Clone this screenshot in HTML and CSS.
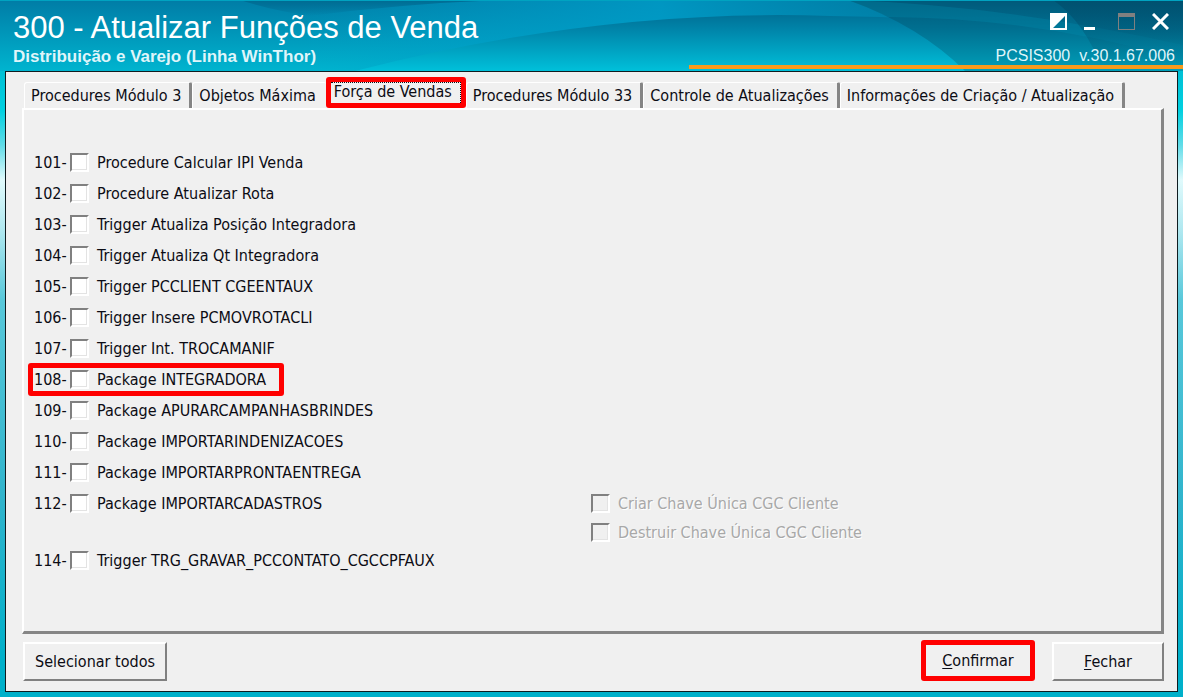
FILE: index.html
```html
<!DOCTYPE html>
<html lang="pt-BR">
<head>
<meta charset="utf-8">
<title>300 - Atualizar Funções de Venda</title>
<link rel="stylesheet" href="styles.css">
</head>
<body>
<div class="window">
  <header class="titlebar">
    <svg class="backdrop" viewBox="0 0 1183 71" preserveAspectRatio="none" aria-hidden="true">
      <defs>
        <linearGradient id="base" x1="0" y1="0" x2="0" y2="1"><stop offset="0" stop-color="#007ca6"/><stop offset="1" stop-color="#00b4cf"/></linearGradient>
        <linearGradient id="glow" x1="0" y1="0" x2="1" y2="0"><stop offset="0" stop-color="#00a0cc" stop-opacity="0"/><stop offset="0.6" stop-color="#009cc8" stop-opacity="0.8"/><stop offset="1" stop-color="#007ca4" stop-opacity="0.6"/></linearGradient>
        <linearGradient id="swoop" gradientUnits="userSpaceOnUse" x1="0" y1="0" x2="0" y2="71"><stop offset="0.2" stop-color="#007197"/><stop offset="0.4" stop-color="#0083a8"/><stop offset="1" stop-color="#00c0da"/></linearGradient>
        <linearGradient id="top" x1="0" y1="0" x2="0" y2="1"><stop offset="0" stop-color="#006b92"/><stop offset="1" stop-color="#006b92" stop-opacity="0"/></linearGradient>
        <linearGradient id="right" x1="0" y1="0" x2="0" y2="1"><stop offset="0" stop-color="#00597a"/><stop offset="0.4" stop-color="#006f90"/><stop offset="1" stop-color="#009fb9"/></linearGradient>
        <linearGradient id="shade" x1="0" y1="0" x2="0" y2="1"><stop offset="0" stop-color="#004a68" stop-opacity="0.6"/><stop offset="1" stop-color="#004a68" stop-opacity="0"/></linearGradient>
      </defs>
      <path fill="url(#base)" d="M0 0H1183V71H0Z"/>
      <path fill="url(#glow)" d="M300 0H900V71H300Z"/>
      <path fill="url(#top)" d="M240 0H500Q400 4 310 16Q270 10 240 0Z"/>
      <path fill="url(#swoop)" d="M355 71Q600 8 830 16Q1040 18 1183 60V71Z"/>
      <path fill="url(#right)" d="M848 0Q920 26 965 71H1183V0Z"/>
      <path fill="#0090b0" fill-opacity="0.3" d="M848 0Q1010 6 1183 45V60Q1040 18 888 17Q868 8 848 0Z"/>
      <path fill="url(#shade)" d="M1053 0Q1085 22 1103 71H1183V0Z"/>
      <path fill="#00a3c1" d="M0 0H1183V1H0Z"/>
    </svg>
    <div class="heading">
      <h1>300 - Atualizar Funções de Venda</h1>
      <p class="subtitle">Distribuição e Varejo (Linha WinThor)</p>
    </div>
    <div class="status">
      <div class="controls">
        <button class="control" type="button" aria-label="Alternar"><svg width="17" height="17" viewBox="0 0 17 17"><path fill="#fff" fill-rule="evenodd" d="M0 0H17V17H0ZM15 3L3 15H15Z"/></svg></button>
        <button class="control" type="button" aria-label="Minimizar"><svg width="17" height="17" viewBox="0 0 17 17"><path fill="#fff" d="M0 14H11V17H0Z"/></svg></button>
        <button class="control" type="button" aria-label="Maximizar" disabled><svg width="17" height="17" viewBox="0 0 17 17"><path fill="#808080" fill-rule="evenodd" d="M0 0H17V17H0ZM1 4V16H16V4Z"/></svg></button>
        <button class="control" type="button" aria-label="Fechar janela"><svg width="17" height="17" viewBox="0 0 17 17"><path stroke="#fff" stroke-width="3" d="M1 1L16 16M16 1L1 16"/></svg></button>
      </div>
      <p class="version"><span>PCSIS300</span><span>v.30.1.67.006</span></p>
    </div>
  </header>
  <main class="client">
    <div class="tabs" role="tablist">
      <button class="tab" role="tab" type="button">Procedures Módulo 3</button>
      <button class="tab before-active" role="tab" type="button">Objetos Máxima</button>
      <button class="tab active" role="tab" type="button" aria-selected="true"><span class="focus">Força de Vendas</span></button>
      <button class="tab" role="tab" type="button">Procedures Módulo 33</button>
      <button class="tab" role="tab" type="button">Controle de Atualizações</button>
      <button class="tab" role="tab" type="button">Informações de Criação / Atualização</button>
    </div>
    <section class="panel" role="tabpanel">
      <div class="list">
        <label class="row"><span class="code">101-</span><input type="checkbox">Procedure Calcular IPI Venda</label>
        <label class="row"><span class="code">102-</span><input type="checkbox">Procedure Atualizar Rota</label>
        <label class="row"><span class="code">103-</span><input type="checkbox">Trigger Atualiza Posição Integradora</label>
        <label class="row"><span class="code">104-</span><input type="checkbox">Trigger Atualiza Qt Integradora</label>
        <label class="row"><span class="code">105-</span><input type="checkbox">Trigger PCCLIENT CGEENTAUX</label>
        <label class="row"><span class="code">106-</span><input type="checkbox">Trigger Insere PCMOVROTACLI</label>
        <label class="row"><span class="code">107-</span><input type="checkbox">Trigger Int. TROCAMANIF</label>
        <label class="row marked"><span class="code">108-</span><input type="checkbox">Package INTEGRADORA</label>
        <label class="row"><span class="code">109-</span><input type="checkbox">Package APURARCAMPANHASBRINDES</label>
        <label class="row"><span class="code">110-</span><input type="checkbox">Package IMPORTARINDENIZACOES</label>
        <label class="row"><span class="code">111-</span><input type="checkbox">Package IMPORTARPRONTAENTREGA</label>
        <label class="row"><span class="code">112-</span><input type="checkbox">Package IMPORTARCADASTROS</label>
        <label class="row last"><span class="code">114-</span><input type="checkbox">Trigger TRG_GRAVAR_PCCONTATO_CGCCPFAUX</label>
      </div>
      <div class="extras">
        <label class="row off"><input type="checkbox" disabled>Criar Chave Única CGC Cliente</label>
        <label class="row off"><input type="checkbox" disabled>Destruir Chave Única CGC Cliente</label>
      </div>
    </section>
    <footer class="actions">
      <button class="button wide" type="button">Selecionar todos</button>
      <button class="button confirm" type="button"><u>C</u>onfirmar</button>
      <button class="button" type="button"><u>F</u>echar</button>
    </footer>
  </main>
</div>
</body>
</html>
```
FILE: styles.css
```css
* { box-sizing: border-box; }
body {
  margin: 0;
  font: 16px/20px "DejaVu Sans Condensed", "DejaVu Sans", sans-serif;
  color: #0c0c14;
}
button { font: inherit; color: inherit; }
h1, p { margin: 0; }
.window {
  min-height: 100vh;
  display: flex;
  flex-direction: column;
  padding: 0 5px 5px;
  background: linear-gradient(#00a3c1 0, #00d0e0 110px, #60dce8 145px, #e0fafc 180px, #b0e8f0 230px, #58c8da 300px, #30b4cc 500px, #00b0ca 660px);
}
.titlebar {
  position: relative;
  display: flex;
  justify-content: space-between;
  height: 71px;
  margin: 0 -5px;
  padding: 11px 8px 0 13px;
  color: #fff;
  font-family: "Liberation Sans", Arial, sans-serif;
  background: #0091b4;
}
.titlebar::after {
  content: "";
  position: absolute;
  left: 689px;
  right: 0;
  bottom: 2px;
  height: 4px;
  background: #f79a1c;
}
.backdrop { position: absolute; inset: 0; width: 100%; height: 100%; }
.heading, .status { position: relative; }
h1 { font-size: 31px; line-height: 34px; font-weight: 400; }
.subtitle { font-size: 17px; line-height: 23px; font-weight: 700; color: #dff5fa; }
.status { display: flex; flex-direction: column; align-items: flex-end; }
.controls { display: flex; gap: 17px; padding: 1px 6px 0 0; }
.control { width: 17px; height: 19px; padding: 0; border: 0; background: none; }
.control svg { display: block; }
.version { display: flex; gap: 9px; padding-top: 15px; font-size: 16px; line-height: 20px; color: #dff5fa; }
.client {
  flex: 1;
  display: flex;
  flex-direction: column;
  padding: 10px 13px 10px 16px;
  border: 1px solid #101c20;
  background: #f0f0f0;
}
.tabs { display: flex; height: 26px; padding-left: 2px; }
.tab {
  padding: 0 8px 0 6px;
  border: 1px solid #fff;
  border-width: 1px 3px 0 1px;
  border-right-color: #858585;
  border-radius: 3px 2px 0 0;
  background: none;
  white-space: nowrap;
}
.before-active { padding-right: 10px; border-right: 0; }
.tab.active {
  height: 31px;
  margin: -5px 0 0;
  padding: 0;
  border: 5px solid #f00;
  border-radius: 3px;
  background: #f0f0f0;
  line-height: 18px;
  z-index: 1;
}
.focus {
  display: block;
  height: 21px;
  padding: 0 8px 0 3px;
  border: dotted #0c0c14;
  border-width: 1px 1px 0 0;
}
.panel {
  flex: 1;
  display: grid;
  grid-template-columns: 557px 1fr;
  padding: 37px 0 30px 10px;
  border: 2px solid #fff;
  border-right: 3px solid #858585;
  border-bottom: 3px solid #858585;
}
.list, .extras { display: flex; flex-direction: column; align-items: flex-start; }
.row { display: flex; align-items: center; height: 31px; white-space: nowrap; }
.code { width: 36px; }
.row input {
  appearance: none;
  width: 19px;
  height: 19px;
  margin: 0 8px 0 0;
  border: 2px solid;
  border-color: #808080 #fff #fff #808080;
  background: #fff;
  box-shadow: inset -1px -1px #e3e3e3;
}
.last { margin-top: 26px; }
.marked {
  height: 33px;
  margin: -1px 0 -1px -6px;
  padding: 0 13px 0 1px;
  border: 5px solid #f00;
  border-radius: 3px;
}
.extras { padding-top: 342px; }
.off { height: 29px; color: #a8a8a8; text-shadow: 1px 1px #fff; }
.row.off input { background: #f0f0f0; }
.actions { display: flex; gap: 17px; padding: 8px 0 0 1px; }
.button {
  width: 112px;
  height: 39px;
  padding: 0;
  border: 2px solid;
  border-color: #fff #808080 #808080 #fff;
  background: #f0f0f0;
}
.wide { width: 144px; margin-right: auto; }
.confirm { width: 114px; height: 41px; margin-top: -2px; border: 5px solid #f00; border-radius: 3px; }
u { text-underline-offset: 2px; }
```
